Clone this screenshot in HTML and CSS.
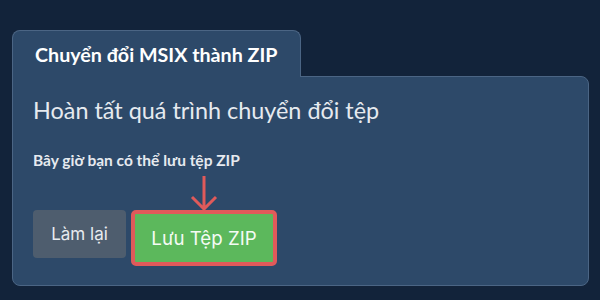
FILE: index.html
```html
<!DOCTYPE html>
<html lang="vi">
<head>
<meta charset="utf-8">
<link rel="stylesheet" href="styles.css">
</head>
<body>
<div class="wrap">
  <div class="tab">Chuyển đổi MSIX thành ZIP</div>
  <div class="panel">
    <h1 class="heading">Hoàn tất quá trình chuyển đổi tệp</h1>
    <p class="sub">Bây giờ bạn có thể lưu tệp ZIP</p>
    <div class="actions">
      <button class="btn btn-gray">Làm lại</button>
      <button class="btn btn-green">Lưu Tệp ZIP
        <svg class="arrow" width="30" height="36" viewBox="0 0 30 36">
          <path d="M15 1 V34 M3 22 L15 34 L27 22" fill="none" stroke="#e05a5a" stroke-width="3"/>
        </svg>
      </button>
    </div>
  </div>
</div>
</body>
</html>
```

FILE: styles.css
```css
html, body {
  margin: 0;
  padding: 0;
  background: #12233a;
  width: 600px;
  height: 300px;
  overflow: hidden;
}
.wrap {
  padding: 30px 12px 0 12px;
  font-family: Lato, "Noto Sans", sans-serif;
}
.tab {
  position: relative;
  z-index: 1;
  box-sizing: border-box;
  width: 289px;
  height: 47px;
  background: #2d4969;
  border: 1px solid #4b6584;
  border-bottom: none;
  border-radius: 8px 8px 0 0;
  color: #ffffff;
  font-weight: 700;
  font-size: 19.7px;
  line-height: 20px;
  padding: 14px 0 0 22px;
}
.panel {
  box-sizing: border-box;
  margin-top: -1px;
  width: 577px;
  height: 210px;
  background: #2d4969;
  border: 1px solid #4b6584;
  border-radius: 0 8px 8px 8px;
  padding: 19px 20px 0 20px;
}
.heading {
  margin: 0;
  font-weight: 400;
  font-size: 23.4px;
  line-height: 28px;
  color: #e6eaef;
}
.sub {
  margin: 27px 0 0 0;
  font-weight: 700;
  font-size: 15.5px;
  line-height: 18px;
  color: #e6eaef;
}
.actions {
  display: flex;
  align-items: flex-start;
  gap: 5px;
  margin-top: 41px;
}
.btn {
  position: relative;
  box-sizing: border-box;
  border: none;
  font-family: Inter, "Noto Sans", sans-serif;
  cursor: pointer;
}
.btn-gray {
  width: 93px;
  height: 48px;
  background: #4e5d6e;
  color: #e8ebef;
  font-size: 17px;
  border-radius: 4px;
}
.btn-green {
  width: 146px;
  height: 56px;
  background: #5cb85c;
  color: #f4fbf4;
  font-size: 18.7px;
  border: 4px solid #e05a5a;
  border-radius: 5px;
}
.arrow {
  position: absolute;
  left: 50%;
  bottom: 100%;
  margin-left: -15px;
  margin-bottom: 3px;
}
```
